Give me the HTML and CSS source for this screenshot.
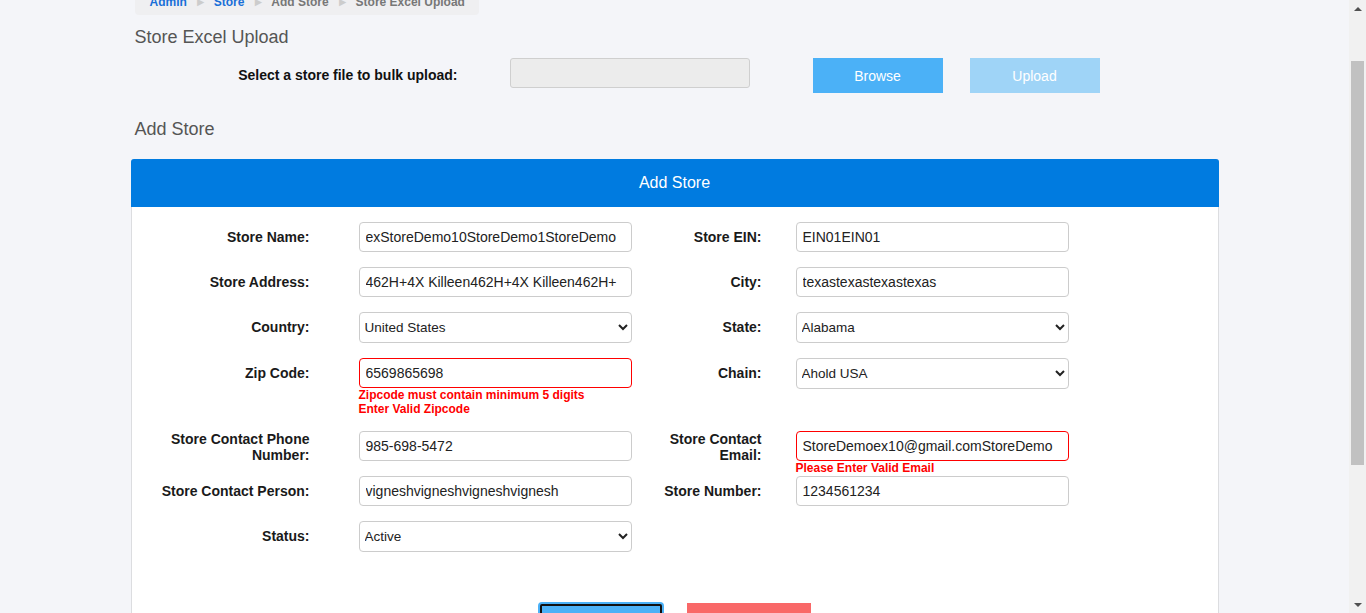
FILE: index.html
```html
<!DOCTYPE html>
<html>
<head>
<meta charset="utf-8">
<link rel="stylesheet" href="styles.css">
</head>
<body>
<div class="viewport">
  <div class="page">
    <div class="container">
      <div class="breadcrumb">
        <a class="crumb-link">Admin</a><span class="sep">&#9658;</span><a class="crumb-link">Store</a><span class="sep">&#9658;</span><span class="crumb">Add Store</span><span class="sep">&#9658;</span><span class="crumb">Store Excel Upload</span>
      </div>
      <h2 class="section-title first">Store Excel Upload</h2>
      <div class="upload-row">
        <label class="upload-label">Select a store file to bulk upload:</label>
        <div class="file-box"></div>
        <button class="btn btn-browse">Browse</button>
        <button class="btn btn-upload">Upload</button>
      </div>
      <h2 class="section-title second">Add Store</h2>
      <div class="card">
        <div class="card-header">Add Store</div>
        <div class="card-body">
          <div class="form-row">
            <div class="lbl">Store Name:</div>
            <div class="fld-l"><input class="inp" value="exStoreDemo10StoreDemo1StoreDemo"></div>
            <div class="lbl">Store EIN:</div>
            <div class="fld-r"><input class="inp" value="EIN01EIN01"></div>
          </div>
          <div class="form-row">
            <div class="lbl">Store Address:</div>
            <div class="fld-l"><input class="inp" value="462H+4X Killeen462H+4X Killeen462H+"></div>
            <div class="lbl">City:</div>
            <div class="fld-r"><input class="inp" value="texastexastexastexas"></div>
          </div>
          <div class="form-row">
            <div class="lbl">Country:</div>
            <div class="fld-l"><select class="sel"><option>United States</option></select></div>
            <div class="lbl">State:</div>
            <div class="fld-r"><select class="sel"><option>Alabama</option></select></div>
          </div>
          <div class="form-row">
            <div class="lbl">Zip Code:</div>
            <div class="fld-l">
              <input class="inp invalid" value="6569865698">
              <div class="err">Zipcode must contain minimum 5 digits</div>
              <div class="err">Enter Valid Zipcode</div>
            </div>
            <div class="lbl">Chain:</div>
            <div class="fld-r"><select class="sel"><option>Ahold USA</option></select></div>
          </div>
          <div class="form-row tight">
            <div class="lbl">Store Contact Phone Number:</div>
            <div class="fld-l"><input class="inp" value="985-698-5472"></div>
            <div class="lbl">Store Contact Email:</div>
            <div class="fld-r">
              <input class="inp invalid" value="StoreDemoex10@gmail.comStoreDemo">
              <div class="err">Please Enter Valid Email</div>
            </div>
          </div>
          <div class="form-row">
            <div class="lbl">Store Contact Person:</div>
            <div class="fld-l"><input class="inp" value="vigneshvigneshvigneshvignesh"></div>
            <div class="lbl">Store Number:</div>
            <div class="fld-r"><input class="inp" value="1234561234"></div>
          </div>
          <div class="form-row">
            <div class="lbl">Status:</div>
            <div class="fld-l"><select class="sel"><option>Active</option></select></div>
          </div>
          <div class="actions">
            <button class="act act-save">Save</button>
            <button class="act act-cancel">Cancel</button>
          </div>
        </div>
      </div>
    </div>
  </div>
  <div class="scrollbar">
    <div class="arrow up"></div>
    <div class="track"><div class="thumb"></div></div>
    <div class="arrow down"></div>
  </div>
</div>
</body>
</html>
```

FILE: styles.css
```css
html, body {
  margin: 0;
  padding: 0;
  height: 613px;
  overflow: hidden;
}
body {
  font-family: "Liberation Sans", Arial, sans-serif;
  background: #f4f5f9;
  color: #222;
}
.viewport {
  display: flex;
  height: 613px;
}
.page {
  flex: 1;
  overflow: hidden;
  min-width: 0;
}
.container {
  width: 1088px;
  margin: -14px auto 0;
}
.breadcrumb {
  display: inline-block;
  margin-left: 4px;
  padding: 8px 14px 4px 15px;
  line-height: 17px;
  font-size: 12px;
  font-weight: bold;
  background: #efeff1;
  border-radius: 0 0 4px 4px;
}
.crumb-link { color: #1a6fd8; }
.crumb { color: #777; }
.sep {
  color: #ccc;
  font-size: 12px;
  margin: 0 7px 0 8px;
}
.section-title {
  font-size: 18px;
  font-weight: normal;
  line-height: 20px;
  color: #555;
  margin: 0 0 0 4px;
}
.section-title.first { margin-top: 12px; }
.section-title.second { margin-top: 25px; }
.upload-row {
  display: flex;
  align-items: flex-start;
  margin-top: 11px;
  height: 36px;
}
.upload-label {
  width: 327px;
  margin-top: 9px;
  line-height: 17px;
  text-align: right;
  font-size: 14px;
  font-weight: bold;
  color: #111;
}
.file-box {
  width: 238px;
  height: 28px;
  margin-left: 52px;
  background: #ececec;
  border: 1px solid #cfcfcf;
  border-radius: 3px;
}
.btn {
  width: 130px;
  height: 35px;
  border: none;
  color: #fff;
  font-family: "Liberation Sans", Arial, sans-serif;
  font-size: 14px;
  padding: 0;
}
.btn-browse {
  margin-left: 63px;
  background: #4bb1f7;
}
.btn-upload {
  margin-left: 27px;
  background: #9fd4f7;
}
.card {
  margin-top: 20px;
  background: #fff;
  border: 1px solid #dcdde0;
  border-radius: 3px 3px 0 0;
}
.card-header {
  height: 48px;
  line-height: 47px;
  background: #007be0;
  color: #fff;
  text-align: center;
  font-size: 16px;
  margin: -1px -1px 0;
  border-radius: 3px 3px 0 0;
}
.card-body {
  padding: 15px 27px 0;
}
.form-row {
  display: grid;
  grid-template-columns: 151px 322px 130px 307px;
  align-items: start;
  margin-bottom: 15px;
}
.form-row.tight { margin-bottom: 1px; }
.lbl {
  min-height: 30px;
  display: flex;
  align-items: center;
  justify-content: flex-end;
  text-align: right;
  font-size: 14px;
  font-weight: bold;
  line-height: 16px;
  color: #1a1a1a;
}
.fld-l { padding-left: 49px; }
.fld-r { padding-left: 34px; }
.inp {
  box-sizing: border-box;
  display: block;
  width: 273px;
  height: 30px;
  padding: 0 6px;
  border: 1px solid #ccc;
  border-radius: 4px;
  font-family: "Liberation Sans", Arial, sans-serif;
  font-size: 14px;
  color: #222;
  background: #fff;
  outline: none;
}
.inp.invalid { border-color: #f00; }
.sel {
  box-sizing: border-box;
  display: block;
  width: 273px;
  height: 31px;
  padding: 0 1px;
  border: 1px solid #ccc;
  border-radius: 4px;
  font-family: "Liberation Sans", Arial, sans-serif;
  font-size: 13.5px;
  color: #222;
  background: #fff;
}
.err {
  color: #f00;
  font-size: 12px;
  font-weight: bold;
  line-height: 14px;
}
.actions {
  display: flex;
  justify-content: center;
  gap: 24px;
  margin-top: 51px;
  padding-bottom: 20px;
}
.act {
  width: 124px;
  height: 40px;
  border: none;
  color: #fff;
  font-family: "Liberation Sans", Arial, sans-serif;
  font-size: 14px;
  align-self: flex-start;
}
.act-save {
  background: #4bb1f7;
  outline: 2px solid #111;
  outline-offset: -3px;
  border-radius: 3px;
  box-shadow: 0 0 0 1px #4bb1f7;
}
.act-cancel {
  background: #f96868;
}
.scrollbar {
  width: 17px;
  height: 613px;
  background: #f1f1f1;
  display: flex;
  flex-direction: column;
}
.arrow {
  height: 17px;
  display: flex;
  align-items: center;
  justify-content: center;
}
.arrow::before {
  content: "";
  width: 0;
  height: 0;
  border-left: 4px solid transparent;
  border-right: 4px solid transparent;
}
.arrow.up::before { border-bottom: 4px solid #505050; }
.arrow.down::before { border-top: 4px solid #505050; }
.track {
  flex: 1;
}
.thumb {
  margin: 44px 2px 0;
  height: 404px;
  background: #c1c1c1;
}
```
